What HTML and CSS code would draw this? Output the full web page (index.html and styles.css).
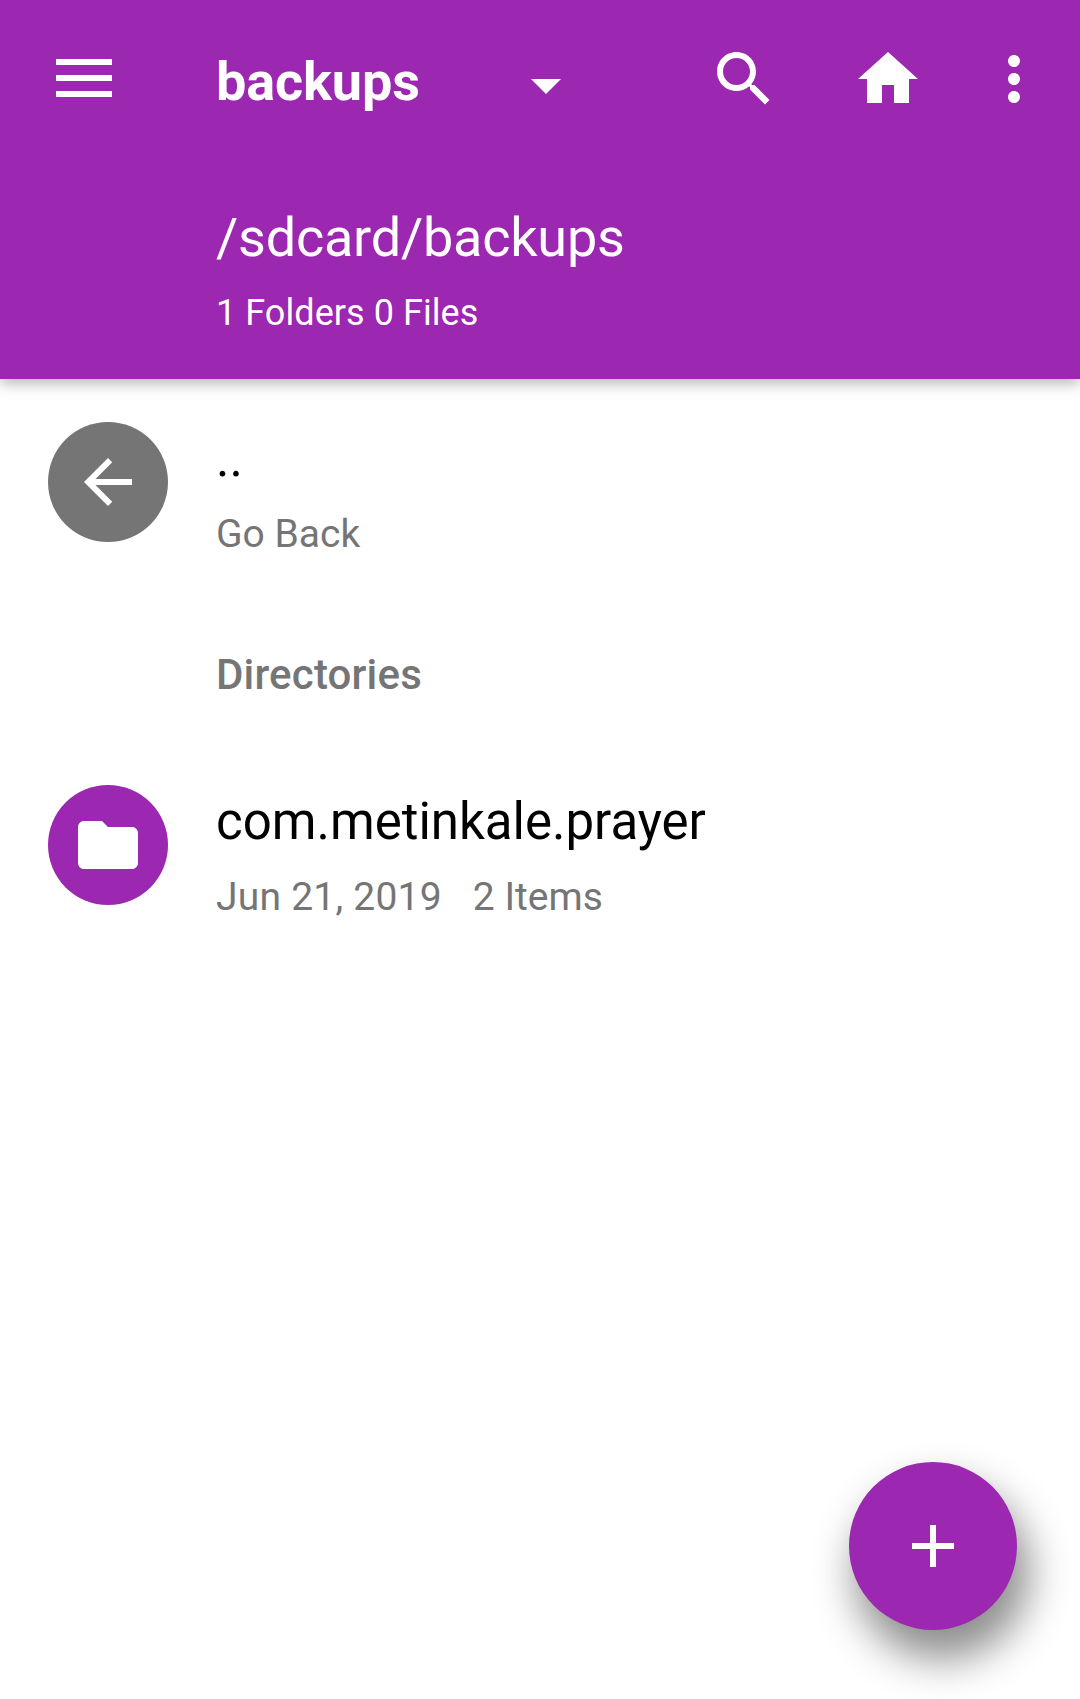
FILE: index.html
```html
<!DOCTYPE html>
<html lang="en">
<head>
<meta charset="utf-8">
<title>backups</title>
<link rel="stylesheet" href="styles.css">
</head>
<body>
<header class="appbar">
  <div class="toolbar">
    <svg class="menu" viewBox="0 0 56 38"><path d="M0 0h56v6H0zM0 16h56v6H0zM0 32h56v6H0z"/></svg>
    <h1 class="title">backups</h1>
    <svg class="icon caret" viewBox="0 0 24 24"><path d="M7 10l5 5 5-5z"/></svg>
    <svg class="icon search" viewBox="0 0 24 24"><path d="M15.5 14h-.79l-.28-.27C15.41 12.59 16 11.11 16 9.5 16 5.91 13.09 3 9.5 3S3 5.91 3 9.5 5.91 16 9.5 16c1.61 0 3.09-.59 4.23-1.57l.27.28v.79l5 4.99L20.49 19l-4.99-5zm-6 0C7.01 14 5 11.99 5 9.5S7.01 5 9.5 5 14 7.01 14 9.5 11.99 14 9.5 14z"/></svg>
    <svg class="icon home" viewBox="0 0 24 24"><path d="M10 20v-6h4v6h5v-8h3L12 3 2 12h3v8z"/></svg>
    <svg class="icon more" viewBox="0 0 24 24"><path d="M12 8c1.100 0 2-.9 2-2s-.9-2-2-2-2 .9-2 2 .9 2 2 2zm0 2c-1.100 0-2 .9-2 2s.9 2 2 2 2-.9 2-2-.9-2-2-2zm0 6c-1.100 0-2 .9-2 2s.9 2 2 2 2-.9 2-2-.9-2-2-2z"/></svg>
  </div>
  <div class="path">/sdcard/backups</div>
  <div class="summary">1 Folders 0 Files</div>
</header>
<main class="list">
  <div class="row">
    <div class="badge back"><svg viewBox="0 0 24 24"><path d="M20 11H7.830l5.590-5.590L12 4l-8 8 8 8 1.410-1.410L7.830 13H20v-2z"/></svg></div>
    <div class="info"><div class="name">..</div><div class="detail">Go Back</div></div>
  </div>
  <h2 class="section">Directories</h2>
  <div class="row">
    <div class="badge folder"><svg viewBox="0 0 24 24"><path d="M10 4H4c-1.100 0-1.990.9-1.990 2L2 18c0 1.100.9 2 2 2h16c1.100 0 2-.9 2-2V8c0-1.100-.9-2-2-2h-8l-2-2z"/></svg></div>
    <div class="info"><div class="name">com.metinkale.prayer</div><div class="detail"><span class="date">Jun 21, 2019</span><span>2 Items</span></div></div>
  </div>
</main>
<button class="fab" aria-label="Add"><svg viewBox="0 0 24 24"><path d="M19 13h-6v6h-2v-6H5v-2h6V5h2v6h6v2z"/></svg></button>
</body>
</html>
```
FILE: styles.css
```css
* { box-sizing: border-box; }
body { margin: 0; height: 1699px; background: #fff; color: #000; font-family: Roboto, "Liberation Sans", sans-serif; overflow: hidden; }
svg { display: block; flex: none; fill: currentColor; }
.appbar { height: 379px; background: #9c27b0; color: #fff; box-shadow: 0 4px 14px rgba(0,0,0,.31); }
.toolbar { display: flex; align-items: flex-start; height: 156px; padding: 43px 0 0 56px; }
.menu { width: 56px; height: 38px; margin-top: 16px; }
.icon { width: 72px; height: 72px; }
.title { width: 294px; margin: 7px 0 0 104px; font-size: 54px; line-height: 64px; font-weight: 700; letter-spacing: -.12px; }
.caret { margin-top: 6px; }
.search { margin-left: 126px; }
.home { margin-left: 72px; }
.more { margin-left: 54px; }
.path { margin: 50px 0 0 216px; font-size: 54px; line-height: 64px; letter-spacing: -.23px; }
.summary { margin: 22px 0 0 216px; font-size: 36px; line-height: 42px; letter-spacing: .06px; }
.list { padding: 43px 48px 0; }
.row { display: flex; gap: 48px; }
.badge { display: grid; place-items: center; flex: none; width: 120px; height: 120px; border-radius: 50%; color: #fff; }
.badge svg { width: 72px; height: 72px; }
.back { background: #757575; }
.folder { background: #9c27b0; }
.info { padding-top: 7px; }
.name { font-size: 51px; line-height: 60px; }
.detail { display: flex; gap: 31px; margin-top: 22px; font-size: 39px; line-height: 46px; color: #757575; }
.date { letter-spacing: .23px; }
.section { margin: 94px 0 86px 168px; font-size: 42px; line-height: 48px; font-weight: 500; letter-spacing: .18px; color: #757575; }
.fab { position: absolute; left: 849px; top: 1462px; display: grid; place-items: center; width: 168px; height: 168px; padding: 0; border: 0; border-radius: 50%; background: #9c27b0; color: #fff; box-shadow: 9px 26px 42px 3px rgba(0,0,0,.45); }
.fab svg { width: 72px; height: 72px; }
```
